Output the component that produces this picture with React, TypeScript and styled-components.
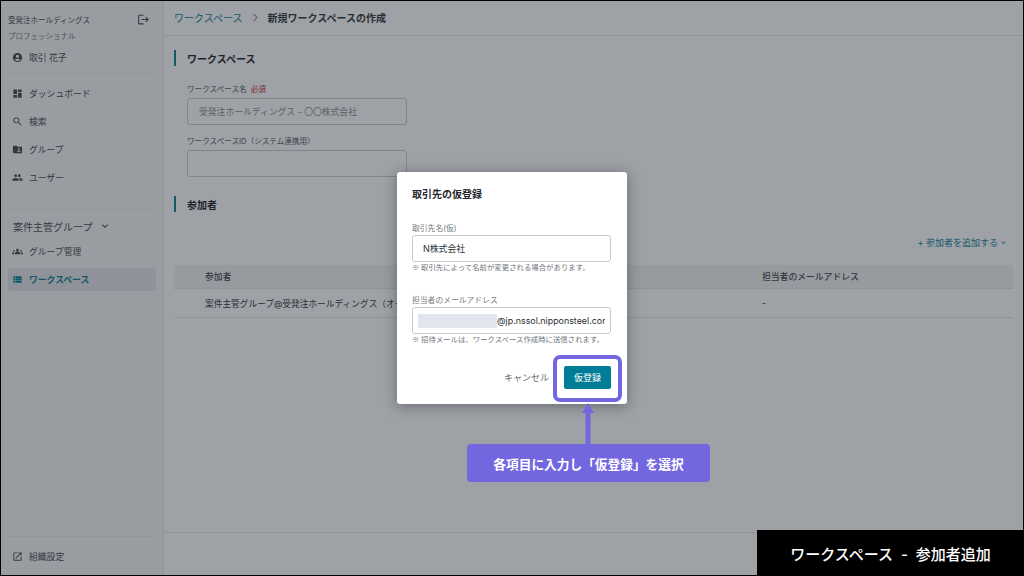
import React from 'react';
import styled, { createGlobalStyle } from 'styled-components';
import {
  MdAccountCircle,
  MdDashboard,
  MdSearch,
  MdFolderShared,
  MdPeople,
  MdGroups,
  MdViewList,
  MdOpenInNew,
  MdKeyboardArrowDown,
  MdLogout,
} from 'react-icons/md';
import { LuChevronRight } from 'react-icons/lu';

const FONT = `Inter, "Noto Sans CJK JP", "Noto Sans", sans-serif`;
const CJK_FONT = `"Noto Sans CJK JP", "Noto Sans", sans-serif`;
const TEAL = '#007d96';
const VIOLET = '#7367e0';

const GlobalStyle = createGlobalStyle`
  html, body { margin: 0; padding: 0; background: #000; }
  body { font-family: ${FONT}; overflow: hidden; }
  * { box-sizing: border-box; }
`;

const navItems = [
  { icon: <MdDashboard />, label: 'ダッシュボード' },
  { icon: <MdSearch />, label: '検索' },
  { icon: <MdFolderShared />, label: 'グループ' },
  { icon: <MdPeople />, label: 'ユーザー' },
];

export default function App() {
  return (
    <Frame>
      <GlobalStyle />
      <Sidebar>
        <OrgRow>
          <OrgName>受発注ホールディングス</OrgName>
          <MdLogout />
        </OrgRow>
        <Plan>プロフェッショナル</Plan>
        <NavItem>
          <MdAccountCircle />
          取引 花子
        </NavItem>
        <SideRule />
        <NavList>
          {navItems.map((item) => (
            <NavItem key={item.label}>
              {item.icon}
              {item.label}
            </NavItem>
          ))}
        </NavList>
        <SideRule />
        <GroupTitle>
          案件主管グループ
          <MdKeyboardArrowDown />
        </GroupTitle>
        <GroupList>
          <NavItem>
            <MdGroups />
            グループ管理
          </NavItem>
          <NavItem $active>
            <MdViewList />
            ワークスペース
          </NavItem>
        </GroupList>
        <SideFooter>
          <NavItem>
            <MdOpenInNew />
            組織設定
          </NavItem>
        </SideFooter>
      </Sidebar>

      <Main>
        <Header>
          <Crumb>ワークスペース</Crumb>
          <LuChevronRight />
          <CrumbCurrent>新規ワークスペースの作成</CrumbCurrent>
        </Header>
        <Content>
          <SectionTitle>ワークスペース</SectionTitle>
          <Fields>
            <FieldLabel>
              ワークスペース名 <Required>必須</Required>
            </FieldLabel>
            <TextBox $muted>受発注ホールディングス - 〇〇株式会社</TextBox>
            <FieldLabel $second>ワークスペースID（システム連携用）</FieldLabel>
            <TextBox />
          </Fields>
          <SectionTitle $second>参加者</SectionTitle>
          <AddRow>
            + 参加者を追加する
            <MdKeyboardArrowDown />
          </AddRow>
          <Table>
            <HeadRow>
              <span>参加者</span>
              <span>担当者のメールアドレス</span>
            </HeadRow>
            <BodyRow>
              <span>案件主管グループ@受発注ホールディングス（オーナー）</span>
              <span>-</span>
            </BodyRow>
          </Table>
        </Content>
        <MainFooter />
      </Main>

      <Overlay />

      <Modal>
        <ModalTitle>取引先の仮登録</ModalTitle>
        <ModalLabel>取引先名(仮)</ModalLabel>
        <ModalInput $inset={10}>N株式会社</ModalInput>
        <Note>※ 取引先によって名前が変更される場合があります。</Note>
        <ModalLabel>担当者のメールアドレス</ModalLabel>
        <ModalInput $inset={5}>
          <Masked />
          <EmailText>@jp.nssol.nipponsteel.com</EmailText>
        </ModalInput>
        <Note>※ 招待メールは、ワークスペース作成時に送信されます。</Note>
        <ModalActions>
          <Cancel>キャンセル</Cancel>
          <Confirm>仮登録</Confirm>
        </ModalActions>
      </Modal>

      <Highlight />
      <Arrow viewBox="0 0 12 41" aria-hidden>
        <path d="M6 0 L12 10 H8.5 V41 H3.5 V10 H0 Z" fill={VIOLET} />
      </Arrow>
      <Callout>各項目に入力し「仮登録」を選択</Callout>
      <Caption>{'ワークスペース  -  参加者追加'}</Caption>
    </Frame>
  );
}

const Frame = styled.div`
  position: relative;
  display: flex;
  width: 1024px;
  height: 576px;
  border: 1px solid #000;
  background: #fff;
  overflow: hidden;
  color: #2b2f36;
`;

const Sidebar = styled.aside`
  display: flex;
  flex-direction: column;
  flex: 0 0 163px;
  padding: 0 7px;
  background: #f6f6f7;
  border-right: 1px solid #e4e5e7;
`;

const OrgRow = styled.div`
  display: flex;
  align-items: center;
  justify-content: space-between;
  height: 14px;
  margin-top: 11px;
  padding-right: 6px;
  color: #40444b;

  svg {
    width: 13px;
    height: 13px;
  }
`;

const OrgName = styled.span`
  font-size: 7.5px;
`;

const Plan = styled.div`
  margin: 5px 0 3px;
  font-size: 7.5px;
  line-height: 12px;
  color: #71757c;
`;

const NavItem = styled.div<{ $active?: boolean }>`
  display: flex;
  align-items: center;
  gap: 6px;
  height: 23px;
  padding-left: 4px;
  border-radius: 3px;
  font-size: 8.8px;
  font-weight: ${(p) => (p.$active ? 700 : 400)};
  color: ${(p) => (p.$active ? TEAL : '#3b3f46')};
  background: ${(p) => (p.$active ? '#e3e4e8' : 'transparent')};

  svg {
    width: 11px;
    height: 11px;
    flex: none;
  }
`;

const SideRule = styled.div`
  height: 1px;
  margin-top: 4px;
  background: #e8e9eb;
`;

const NavList = styled.div`
  display: flex;
  flex-direction: column;
  gap: 5px;
  margin-top: 8px;
  margin-bottom: 16px;
`;

const GroupTitle = styled.div`
  display: flex;
  align-items: center;
  gap: 7px;
  height: 16px;
  margin: 8px 0 6px 5px;
  font-size: 10px;
  color: #40444b;

  svg {
    width: 12px;
    height: 12px;
  }
`;

const GroupList = styled.div`
  display: flex;
  flex-direction: column;
  gap: 5px;
`;

const SideFooter = styled.div`
  margin-top: auto;
  padding: 8px 0 7px;
  border-top: 1px solid #e8e9eb;
`;

const Main = styled.main`
  display: flex;
  flex-direction: column;
  flex: 1;
  min-width: 0;
`;

const Header = styled.header`
  display: flex;
  align-items: center;
  gap: 6px;
  flex: 0 0 35px;
  padding: 0 0 2px 10px;
  border-bottom: 1px solid #e6e7e9;
  font-size: 10px;

  svg {
    width: 13px;
    height: 13px;
    stroke-width: 1.6;
    color: #3b3f46;
  }
`;

const Crumb = styled.span`
  color: ${TEAL};
`;

const CrumbCurrent = styled.span`
  font-weight: 700;
`;

const Content = styled.div`
  flex: 1;
  padding: 14px 10px 0;
`;

const SectionTitle = styled.h2<{ $second?: boolean }>`
  display: flex;
  align-items: center;
  height: 16px;
  margin: ${(p) => (p.$second ? '19px' : '0')} 0 0;
  padding-left: 11px;
  border-left: 2px solid ${TEAL};
  font-size: 10px;
  font-weight: 700;
  color: #16181c;
`;

const Fields = styled.div`
  padding: 18px 0 0 13px;
`;

const FieldLabel = styled.div<{ $second?: boolean }>`
  height: 12px;
  margin-top: ${(p) => (p.$second ? '11px' : '0')};
  margin-bottom: 2px;
  font-size: 7.6px;
  line-height: 12px;
  color: #51555c;
`;

const Required = styled.span`
  margin-left: 2px;
  color: #c0272d;
`;

const TextBox = styled.div<{ $muted?: boolean }>`
  display: flex;
  align-items: center;
  width: 220px;
  height: 27px;
  padding-left: 11px;
  border: 1px solid #c9cbcf;
  border-radius: 3px;
  font-size: 8.8px;
  color: ${(p) => (p.$muted ? '#868a90' : '#2b2f36')};
`;

const AddRow = styled.div`
  display: flex;
  align-items: center;
  justify-content: flex-end;
  height: 14px;
  margin-top: 23px;
  padding-right: 5px;
  font-size: 9px;
  color: ${TEAL};

  svg {
    width: 9px;
    height: 9px;
    margin-left: 1px;
  }
`;

const Table = styled.div`
  margin-top: 16px;
`;

const tableColumns = `
  display: grid;
  grid-template-columns: 557px 1fr;
  align-items: center;
  padding-left: 31px;
  border-bottom: 1px solid #e4e5e7;
  white-space: nowrap;
`;

const HeadRow = styled.div`
  ${tableColumns}
  height: 24px;
  background: #f2f3f4;
  font-size: 8.8px;
  font-weight: 500;
  color: #3b3f46;
`;

const BodyRow = styled.div`
  ${tableColumns}
  height: 29px;
  font-size: 8.7px;
  color: #2b2f36;
`;

const MainFooter = styled.div`
  flex: 0 0 43px;
  border-top: 1px solid #e6e7e9;
`;

const Overlay = styled.div`
  position: absolute;
  inset: 0;
  background: rgba(40, 46, 56, 0.45);
`;

const Modal = styled.div`
  position: absolute;
  left: 396px;
  top: 171px;
  width: 230px;
  height: 232px;
  padding: 15px 16px 0 15px;
  background: #fff;
  border-radius: 3px;
  box-shadow: 0 2px 14px rgba(20, 24, 32, 0.4);
`;

const ModalTitle = styled.h3`
  margin: 0;
  font-size: 10px;
  line-height: 14px;
  font-weight: 700;
  color: #24272c;
`;

const ModalLabel = styled.div`
  margin-top: 21px;
  font-size: 7.8px;
  line-height: 12px;
  color: #777b81;
`;

const ModalInput = styled.div<{ $inset: number }>`
  display: flex;
  align-items: center;
  height: 27px;
  margin-top: 1px;
  padding: 0 5px 0 ${(p) => p.$inset}px;
  border: 1px solid #c8cacd;
  border-radius: 3px;
  font-size: 8.9px;
  color: #2b2f36;
  white-space: nowrap;
`;

const Masked = styled.span`
  flex: 0 0 79px;
  height: 14px;
  background: #e2e4ee;
`;

const EmailText = styled.span`
  flex: 1;
  min-width: 0;
  overflow: hidden;
`;

const Note = styled.div`
  padding-bottom: 1px;
  font-family: ${CJK_FONT};
  font-size: 7.4px;
  line-height: 10px;
  color: #71757c;
  white-space: nowrap;
`;

const ModalActions = styled.div`
  display: flex;
  align-items: center;
  justify-content: flex-end;
  gap: 15px;
  margin-top: 21px;
`;

const Cancel = styled.span`
  font-size: 9px;
  color: #666a70;
`;

const Confirm = styled.span`
  display: flex;
  align-items: center;
  justify-content: center;
  width: 47px;
  height: 23px;
  border-radius: 2px;
  background: ${TEAL};
  font-size: 9px;
  color: #fff;
`;

const Highlight = styled.div`
  position: absolute;
  left: 552px;
  top: 354px;
  width: 69px;
  height: 47px;
  border: 4px solid ${VIOLET};
  border-radius: 7px;
`;

const Arrow = styled.svg`
  position: absolute;
  left: 581px;
  top: 402px;
  width: 12px;
  height: 41px;
`;

const Callout = styled.div`
  position: absolute;
  left: 466px;
  top: 443px;
  display: flex;
  align-items: center;
  justify-content: center;
  width: 243px;
  height: 38px;
  border-radius: 4px;
  background: ${VIOLET};
  font-size: 12.7px;
  font-weight: 700;
  color: #fff;
`;

const Caption = styled.div`
  position: absolute;
  right: -1px;
  bottom: -1px;
  display: flex;
  align-items: center;
  justify-content: center;
  width: 267px;
  height: 46px;
  background: #000;
  font-size: 15px;
  font-weight: 500;
  color: #fff;
  white-space: pre;
`;
